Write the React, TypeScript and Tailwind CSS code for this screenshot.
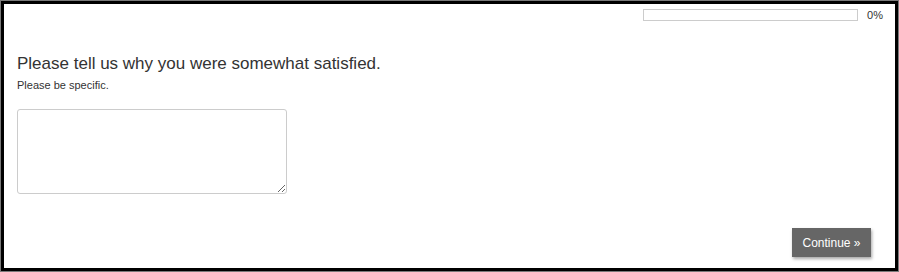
export default function App() {
  return (
    <div className="h-[272px] w-[899px] border border-[#7a7a7a] bg-white font-['Liberation_Sans',Arial,sans-serif]">
      <div className="flex h-full flex-col border-[3px] border-black">
        <div className="flex items-center justify-end pr-[12px] pt-[5px]">
          <div className="h-[12px] w-[215px] border border-[#cccccc] bg-white" />
          <span className="ml-[9px] text-[11px] leading-[12px] text-[#333333]">0%</span>
        </div>

        <div className="pl-[13px] pt-[32px]">
          <h1 className="text-[17px] leading-[22px] text-[#333333]">
            Please tell us why you were somewhat satisfied.
          </h1>
          <p className="mt-[3px] text-[11px] leading-[14px] text-[#333333]">Please be specific.</p>
          <textarea className="mt-[17px] block h-[85px] w-[270px] rounded-[3px] border border-[#cccccc] bg-white p-1 text-[13px] outline-none" />
        </div>

        <div className="mt-auto flex justify-end pb-[11px] pr-[24px]">
          <button className="h-[29px] w-[79px] bg-[#666666] text-[12px] text-white shadow-[1px_2px_3px_rgba(0,0,0,0.35)]">
            Continue »
          </button>
        </div>
      </div>
    </div>
  )
}
